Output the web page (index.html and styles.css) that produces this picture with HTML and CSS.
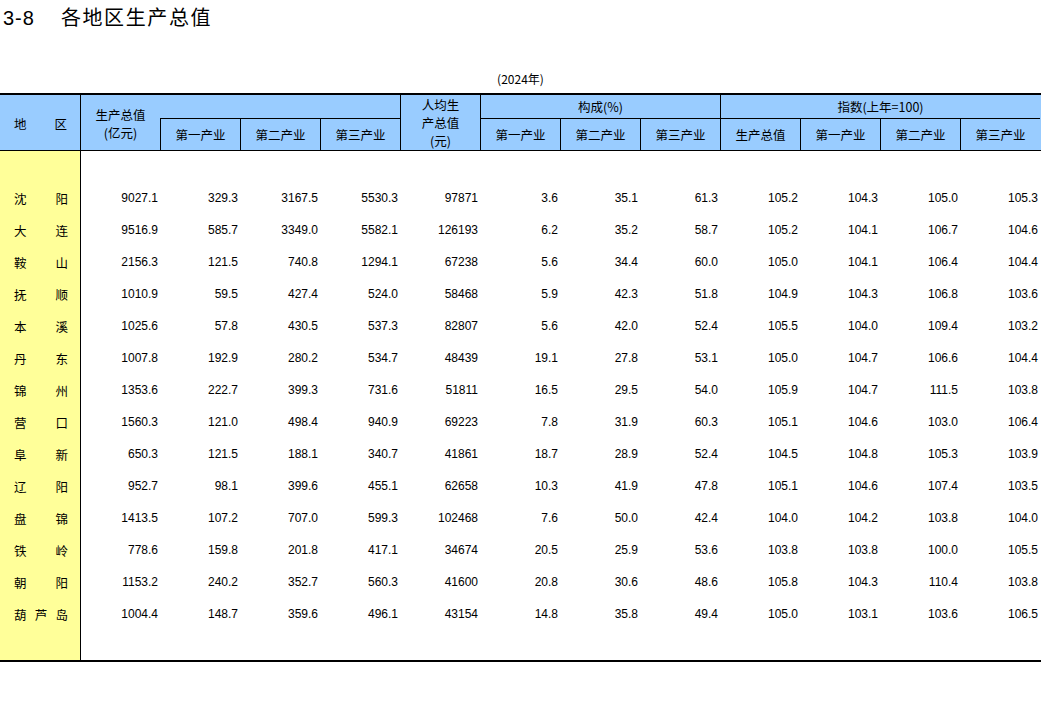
FILE: index.html
```html
<!DOCTYPE html>
<html lang="zh">
<head>
<meta charset="utf-8">
<title>3-8 各地区生产总值</title>
<link rel="stylesheet" href="styles.css">
</head>
<body>
<div class="page">
  <h1 class="title"><span class="num">3-8</span><span class="name-t">各地区生产总值</span></h1>
  <div class="year">(2024年)</div>
  <div class="table">
    <div class="thead">
      <div class="hc h-region"><span>地</span><span>区</span></div>
      <div class="hc h-gdp bl multi"><span>生产总值</span><span>(亿元)</span></div>
      <div class="hc h-percap bl multi"><span>人均生</span><span>产总值</span><span>(元)</span></div>
      <div class="hc h-comp bl">构成(%)</div>
      <div class="hc h-idx bl">指数(上年=100)</div>
      <div class="hc sub bl">第一产业</div>
      <div class="hc sub bl">第二产业</div>
      <div class="hc sub bl">第三产业</div>
      <div class="hc sub bl">第一产业</div>
      <div class="hc sub bl">第二产业</div>
      <div class="hc sub bl">第三产业</div>
      <div class="hc sub bl">生产总值</div>
      <div class="hc sub bl">第一产业</div>
      <div class="hc sub bl">第二产业</div>
      <div class="hc sub bl">第三产业</div>
    </div>
    <div class="tbody">
      <div class="names">
        <div class="name"><span>沈</span><span>阳</span></div>
        <div class="name"><span>大</span><span>连</span></div>
        <div class="name"><span>鞍</span><span>山</span></div>
        <div class="name"><span>抚</span><span>顺</span></div>
        <div class="name"><span>本</span><span>溪</span></div>
        <div class="name"><span>丹</span><span>东</span></div>
        <div class="name"><span>锦</span><span>州</span></div>
        <div class="name"><span>营</span><span>口</span></div>
        <div class="name"><span>阜</span><span>新</span></div>
        <div class="name"><span>辽</span><span>阳</span></div>
        <div class="name"><span>盘</span><span>锦</span></div>
        <div class="name"><span>铁</span><span>岭</span></div>
        <div class="name"><span>朝</span><span>阳</span></div>
        <div class="name"><span>葫</span><span>芦</span><span>岛</span></div>
      </div>
      <div class="data">
        <div class="row"><span>9027.1</span><span>329.3</span><span>3167.5</span><span>5530.3</span><span>97871</span><span>3.6</span><span>35.1</span><span>61.3</span><span>105.2</span><span>104.3</span><span>105.0</span><span>105.3</span></div>
        <div class="row"><span>9516.9</span><span>585.7</span><span>3349.0</span><span>5582.1</span><span>126193</span><span>6.2</span><span>35.2</span><span>58.7</span><span>105.2</span><span>104.1</span><span>106.7</span><span>104.6</span></div>
        <div class="row"><span>2156.3</span><span>121.5</span><span>740.8</span><span>1294.1</span><span>67238</span><span>5.6</span><span>34.4</span><span>60.0</span><span>105.0</span><span>104.1</span><span>106.4</span><span>104.4</span></div>
        <div class="row"><span>1010.9</span><span>59.5</span><span>427.4</span><span>524.0</span><span>58468</span><span>5.9</span><span>42.3</span><span>51.8</span><span>104.9</span><span>104.3</span><span>106.8</span><span>103.6</span></div>
        <div class="row"><span>1025.6</span><span>57.8</span><span>430.5</span><span>537.3</span><span>82807</span><span>5.6</span><span>42.0</span><span>52.4</span><span>105.5</span><span>104.0</span><span>109.4</span><span>103.2</span></div>
        <div class="row"><span>1007.8</span><span>192.9</span><span>280.2</span><span>534.7</span><span>48439</span><span>19.1</span><span>27.8</span><span>53.1</span><span>105.0</span><span>104.7</span><span>106.6</span><span>104.4</span></div>
        <div class="row"><span>1353.6</span><span>222.7</span><span>399.3</span><span>731.6</span><span>51811</span><span>16.5</span><span>29.5</span><span>54.0</span><span>105.9</span><span>104.7</span><span>111.5</span><span>103.8</span></div>
        <div class="row"><span>1560.3</span><span>121.0</span><span>498.4</span><span>940.9</span><span>69223</span><span>7.8</span><span>31.9</span><span>60.3</span><span>105.1</span><span>104.6</span><span>103.0</span><span>106.4</span></div>
        <div class="row"><span>650.3</span><span>121.5</span><span>188.1</span><span>340.7</span><span>41861</span><span>18.7</span><span>28.9</span><span>52.4</span><span>104.5</span><span>104.8</span><span>105.3</span><span>103.9</span></div>
        <div class="row"><span>952.7</span><span>98.1</span><span>399.6</span><span>455.1</span><span>62658</span><span>10.3</span><span>41.9</span><span>47.8</span><span>105.1</span><span>104.6</span><span>107.4</span><span>103.5</span></div>
        <div class="row"><span>1413.5</span><span>107.2</span><span>707.0</span><span>599.3</span><span>102468</span><span>7.6</span><span>50.0</span><span>42.4</span><span>104.0</span><span>104.2</span><span>103.8</span><span>104.0</span></div>
        <div class="row"><span>778.6</span><span>159.8</span><span>201.8</span><span>417.1</span><span>34674</span><span>20.5</span><span>25.9</span><span>53.6</span><span>103.8</span><span>103.8</span><span>100.0</span><span>105.5</span></div>
        <div class="row"><span>1153.2</span><span>240.2</span><span>352.7</span><span>560.3</span><span>41600</span><span>20.8</span><span>30.6</span><span>48.6</span><span>105.8</span><span>104.3</span><span>110.4</span><span>103.8</span></div>
        <div class="row"><span>1004.4</span><span>148.7</span><span>359.6</span><span>496.1</span><span>43154</span><span>14.8</span><span>35.8</span><span>49.4</span><span>105.0</span><span>103.1</span><span>103.6</span><span>106.5</span></div>
      </div>
    </div>
  </div>
</div>
</body>
</html>
```

FILE: styles.css
```css
html, body {
  margin: 0;
  padding: 0;
  background: #fff;
}

body {
  font-family: "Noto Sans CJK SC", "Liberation Sans", sans-serif;
  color: #000;
  width: 1041px;
  overflow: hidden;
}

.page {
  width: 1041px;
}

.title {
  margin: 0;
  padding: 3px 0 0 3px;
  height: 28px;
  line-height: 28px;
  font-size: 20px;
  font-weight: normal;
  white-space: nowrap;
}

.title .num {
  font-family: "Liberation Sans", "Noto Sans CJK SC", sans-serif;
  font-size: 20px;
  letter-spacing: 1px;
  margin-right: 26px;
}

.title .name-t {
  letter-spacing: 1.6px;
}

.year {
  margin-top: 40px;
  height: 16px;
  line-height: 16px;
  font-size: 12px;
  text-align: center;
}

.table {
  margin-top: 6px;
  width: 1041px;
}

.thead {
  display: grid;
  grid-template-columns: repeat(13, 80px);
  grid-template-rows: 23px 32px;
  background: #99ccff;
  border-top: 2px solid #000;
  border-bottom: 1px solid #000;
  font-size: 12.5px;
}

.hc {
  box-sizing: border-box;
  display: flex;
  flex-direction: column;
  align-items: center;
  justify-content: center;
  text-align: center;
  line-height: 16px;
  white-space: nowrap;
}

.hc.multi {
  line-height: 18px;
}

.bl {
  border-left: 1px solid #000;
}

.h-region {
  grid-column: 1;
  grid-row: 1 / 3;
  flex-direction: row;
  justify-content: space-between;
  padding: 2px 13px 0 14px;
}

.h-gdp {
  grid-column: 2;
  grid-row: 1 / 3;
  padding-top: 2px;
}

.h-percap {
  grid-column: 6;
  grid-row: 1 / 3;
}

.h-comp {
  grid-column: 7 / 10;
  grid-row: 1;
}

.h-idx {
  grid-column: 10 / 14;
  grid-row: 1;
}

.sub {
  grid-row: 2;
  border-top: 1px solid #000;
}

.tbody {
  display: flex;
  border-bottom: 2px solid #000;
}

.names {
  box-sizing: border-box;
  width: 81px;
  flex: none;
  background: #ffff99;
  border-right: 1px solid #000;
  padding: 31px 12px 30px 14px;
  font-size: 12.5px;
}

.name {
  height: 32px;
  display: flex;
  justify-content: space-between;
  align-items: center;
}

.data {
  flex: 1;
  padding: 31px 0 30px;
  font-family: "Liberation Sans", Arial, sans-serif;
  font-size: 12px;
}

.row {
  display: grid;
  grid-template-columns: 79px repeat(11, 80px);
  height: 32px;
  align-items: center;
}

.row span {
  text-align: right;
  padding-right: 2px;
}
```
